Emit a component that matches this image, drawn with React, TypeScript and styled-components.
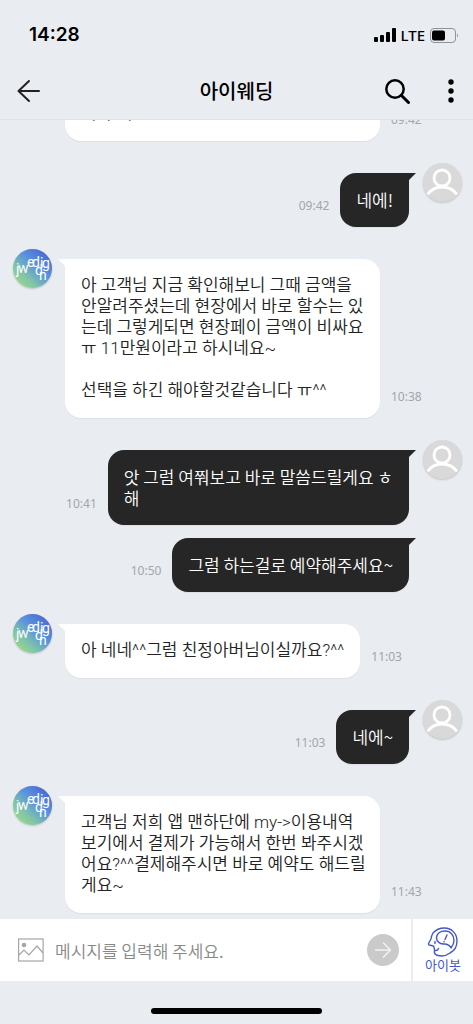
import React from "react";
import styled, { createGlobalStyle, css } from "styled-components";

const sans = `"Noto Sans CJK KR", "Noto Sans", sans-serif`;

const GlobalStyle = createGlobalStyle`
  * { box-sizing: border-box; }
  body { margin: 0; background: #e9ecf1; }
  button { border: 0; padding: 0; background: none; color: inherit; font: inherit; cursor: pointer; }
  svg { display: block; }
`;

const Screen = styled.div`
  display: flex;
  flex-direction: column;
  height: 100vh;
  background: #e9ecf1;
  color: #222;
  font-family: ${sans};
`;

const StatusBar = styled.div`
  display: flex;
  align-items: center;
  justify-content: space-between;
  flex: none;
  height: 64px;
  padding: 6px 14px 0 29px;
  color: #000;
`;

const Clock = styled.time`
  font: 600 19px/24px Inter, sans-serif;
`;

const Signals = styled.div`
  display: flex;
  align-items: center;
  gap: 5px;
  font: 500 15px/20px "Noto Sans", sans-serif;
`;

const Header = styled.header`
  display: grid;
  grid-template-columns: 1fr auto 1fr;
  align-items: center;
  flex: none;
  height: 56px;
  padding: 0 17px 2px;
  border-bottom: 1px solid #dfe2e6;
  color: #000;
`;

const Title = styled.h1`
  margin: 0;
  font-size: 20px;
  line-height: 28px;
  font-weight: 500;
`;

const Actions = styled.div`
  display: flex;
  justify-content: flex-end;
  gap: 35px;
`;

const Chat = styled.main`
  display: flex;
  flex: 1;
  flex-direction: column;
  justify-content: flex-end;
  min-height: 0;
  overflow: hidden;
  padding: 0 11px 6px 13px;
`;

const Row = styled.article<{ $mine?: boolean; $follow?: boolean }>`
  display: flex;
  flex: none;
  flex-direction: ${(p) => (p.$mine ? "row-reverse" : "row")};
  gap: ${(p) => (p.$mine ? "14px" : "13px")};
  margin-top: ${(p) => (p.$follow ? "3px" : "22px")};
`;

const AvatarSlot = styled.div`
  flex: none;
  width: 39px;
`;

const Avatar = styled.div`
  width: 39px;
  height: 39px;
  border-radius: 50%;
  overflow: hidden;
  background: #d9d9d9;
  box-shadow: 0 1px 2px rgba(0, 0, 0, 0.18);
`;

const BubbleLine = styled.div<{ $mine?: boolean }>`
  display: flex;
  flex: 1;
  flex-direction: ${(p) => (p.$mine ? "row-reverse" : "row")};
  align-items: flex-end;
  gap: 11px;
  padding-top: 10px;
`;

const Bubble = styled.p<{ $mine?: boolean; $wide?: boolean }>`
  position: relative;
  width: ${(p) => (p.$wide ? "315px" : "auto")};
  max-width: 315px;
  margin: 0;
  padding: 16px 16px 17px;
  border-radius: 16px;
  background: #fff;
  box-shadow: 0 1px 1px rgba(0, 0, 0, 0.06);
  font: 350 17px/21px Roboto, ${sans};
  white-space: pre;

  &::before {
    content: "";
    position: absolute;
    top: 0;
    width: 7px;
    height: 7px;
    background: inherit;
  }

  ${(p) =>
    p.$mine
      ? css`
          border-top-right-radius: 0;
          background: #262626;
          color: #fff;
          font-family: ${sans};
          &::before {
            left: 100%;
            clip-path: polygon(0 0, 100% 0, 0 100%);
          }
        `
      : css`
          border-top-left-radius: 0;
          &::before {
            right: 100%;
            clip-path: polygon(0 0, 100% 0, 100% 100%);
          }
        `}
`;

const Sent = styled.time`
  flex: none;
  margin-bottom: 11px;
  color: #a2a6ad;
  font: 400 12px/20px "Noto Sans", sans-serif;
`;

const Composer = styled.form`
  display: flex;
  flex: none;
  height: 62px;
  background: #fff;
`;

const Entry = styled.div`
  display: flex;
  flex: 1;
  align-items: center;
  gap: 11px;
  min-width: 0;
  padding: 0 12px 0 18px;
`;

const MessageInput = styled.input`
  flex: 1;
  min-width: 0;
  height: 40px;
  padding: 0;
  border: 0;
  outline: 0;
  background: none;
  color: #222;
  font: 350 17px/24px ${sans};
  &::placeholder { color: #888; opacity: 1; }
`;

const SendButton = styled.button`
  display: grid;
  place-items: center;
  width: 32px;
  height: 32px;
  border-radius: 50%;
  background: #cacaca;
`;

const BotButton = styled.button`
  display: flex;
  flex-direction: column;
  align-items: center;
  justify-content: center;
  width: 62px;
  border-left: 2px solid #e9ecf1;
  color: #4459c9;
  font-size: 13px;
  line-height: 16px;
`;

const HomeArea = styled.footer`
  display: flex;
  flex: none;
  justify-content: center;
  height: 43px;
  padding-top: 27px;
`;

const HomeBar = styled.div`
  width: 36%;
  height: 6px;
  border-radius: 3px;
  background: #000;
`;

function BrandAvatar() {
  return (
    <Avatar>
      <svg width="39" height="39" viewBox="0 0 39 39" role="img" aria-label="iwedding">
        <defs>
          <linearGradient id="brand" x1="0.1" y1="0.9" x2="0.85" y2="0.1">
            <stop offset="0" stopColor="#9bd98b" />
            <stop offset="0.28" stopColor="#7fc3a9" />
            <stop offset="0.6" stopColor="#5b95dc" />
            <stop offset="1" stopColor="#4a69d4" />
          </linearGradient>
        </defs>
        <rect width="39" height="39" fill="url(#brand)" />
        <text
          x="3 5 14 19 22 27 29 26"
          y="25 24 18 18 26 19 19 31"
          fill="#fff"
          fontSize="14"
          fontWeight="400"
          fontFamily="Roboto, sans-serif"
        >
          jweddign
        </text>
      </svg>
    </Avatar>
  );
}

function UserAvatar() {
  return (
    <Avatar>
      <svg width="39" height="39" viewBox="0 0 39 39" fill="none" stroke="#fff" strokeWidth="2.800">
        <circle cx="19" cy="15" r="8" />
        <path d="M4.500 31.500C8 26.500 13 24 19 24s11.500 2.500 15 7.500" />
      </svg>
    </Avatar>
  );
}

type Message = { text: string; time: string; mine?: boolean; follow?: boolean; wide?: boolean };

const messages: Message[] = [
  { text: "거나 네", time: "09:42", follow: true, wide: true },
  { text: "네에!", time: "09:42", mine: true },
  {
    text: "아 고객님 지금 확인해보니 그때 금액을\n안알려주셨는데 현장에서 바로 할수는 있\n는데 그렇게되면 현장페이 금액이 비싸요\nㅠ 11만원이라고 하시네요~\n\n선택을 하긴 해야할것같습니다 ㅠ^^",
    time: "10:38",
    wide: true,
  },
  { text: "앗 그럼 여쭤보고 바로 말씀드릴게요 ㅎ\n해", time: "10:41", mine: true },
  { text: "그럼 하는걸로 예약해주세요~", time: "10:50", mine: true, follow: true },
  { text: "아 네네^^그럼 친정아버님이실까요?^^", time: "11:03" },
  { text: "네에~", time: "11:03", mine: true },
  {
    text: "고객님 저희 앱 맨하단에 my->이용내역\n보기에서 결제가 가능해서 한번 봐주시겠\n어요?^^결제해주시면 바로 예약도 해드릴\n게요~",
    time: "11:43",
    wide: true,
  },
];

function MessageRow({ text, time, mine, follow, wide }: Message) {
  return (
    <Row $mine={mine} $follow={follow}>
      <AvatarSlot>{!follow && (mine ? <UserAvatar /> : <BrandAvatar />)}</AvatarSlot>
      <BubbleLine $mine={mine}>
        <Bubble $mine={mine} $wide={wide}>{text}</Bubble>
        <Sent>{time}</Sent>
      </BubbleLine>
    </Row>
  );
}

export default function App() {
  return (
    <Screen>
      <GlobalStyle />
      <StatusBar>
        <Clock>14:28</Clock>
        <Signals>
          <svg width="22" height="14" viewBox="0 0 22 14">
            <rect x="0" y="9" width="4" height="5" rx="1" />
            <rect x="6" y="7" width="4" height="7" rx="1" />
            <rect x="12" y="4" width="4" height="10" rx="1" />
            <rect x="18" y="0" width="4" height="14" rx="1" />
          </svg>
          LTE
          <svg width="29" height="15" viewBox="0 0 29 15">
            <rect x="0.500" y="0.500" width="25" height="14" rx="3.500" fill="none" stroke="#8f9297" />
            <rect x="2" y="2.500" width="13" height="10" rx="2" />
            <path d="M27 5.500q2 2 0 4z" fill="#8f9297" />
          </svg>
        </Signals>
      </StatusBar>

      <Header>
        <button type="button" aria-label="뒤로">
          <svg width="24" height="24" viewBox="0 0 24 24" fill="none" stroke="#222" strokeWidth="2" strokeLinecap="round" strokeLinejoin="round">
            <path d="M12 2 1.500 12 12 22M2 12h20" />
          </svg>
        </button>
        <Title>아이웨딩</Title>
        <Actions>
          <button type="button" aria-label="검색">
            <svg width="28" height="28" viewBox="0 0 28 28" fill="none" stroke="#000" strokeWidth="2.500" strokeLinecap="round">
              <circle cx="12" cy="12" r="8.700" />
              <path d="m18.500 18.500 7 7" strokeWidth="3" />
            </svg>
          </button>
          <button type="button" aria-label="메뉴">
            <svg width="10" height="28" viewBox="0 0 10 28">
              <circle cx="5" cy="5" r="2.700" />
              <circle cx="5" cy="14" r="2.700" />
              <circle cx="5" cy="23" r="2.700" />
            </svg>
          </button>
        </Actions>
      </Header>

      <Chat>
        {messages.map((m, i) => (
          <MessageRow key={i} {...m} />
        ))}
      </Chat>

      <Composer onSubmit={(e) => e.preventDefault()}>
        <Entry>
          <button type="button" aria-label="사진 첨부">
            <svg width="26" height="24" viewBox="0 0 26 24" fill="none" stroke="#a6a6a6" strokeWidth="1.200">
              <rect x="0.600" y="1" width="24.500" height="22" />
              <path d="m1 17 5-5 5 5 8-9 6 7" />
              <circle cx="6" cy="7" r="2.300" fill="#a6a6a6" stroke="none" />
            </svg>
          </button>
          <MessageInput aria-label="메시지" placeholder="메시지를 입력해 주세요." />
          <SendButton type="submit" aria-label="보내기">
            <svg width="18" height="18" viewBox="0 0 18 18" fill="none" stroke="#f2f2f2" strokeWidth="1.500">
              <path d="M1 9h15M9 1.500 16.500 9 9 16.500" />
            </svg>
          </SendButton>
        </Entry>
        <BotButton type="button">
          <svg width="32" height="30" viewBox="0 0 32 30" fill="none" stroke="#4459c9" strokeWidth="1.400" strokeLinecap="round" strokeLinejoin="round">
            <path d="M6 6C9 2.500 13 1 17.500 1 25 1 30 7 30 14c0 6-3 10-7 12-4 3-8 3.500-12 2.500-3-.5-4-2-3.500-5 .2-2-.5-3-1-4.500L2 18c-.8-.5-.5-1.500 0-2.500L4 12c.3-2.500.8-4 2-6z" />
            <path d="M9.500 10C10.500 6 14 4 18 4c5.500 0 9 4 9 9.500 0 3-1 5-3 7.500-1-2.500-3-3.500-6-4-4 .5-9-2-8.500-7z" />
            <path d="m20 8-2 4.500M17 14.500v.2M8 14.500v2M8 23.500c2 .3 3-.5 3.500-2" />
          </svg>
          아이봇
        </BotButton>
      </Composer>

      <HomeArea>
        <HomeBar />
      </HomeArea>
    </Screen>
  );
}
